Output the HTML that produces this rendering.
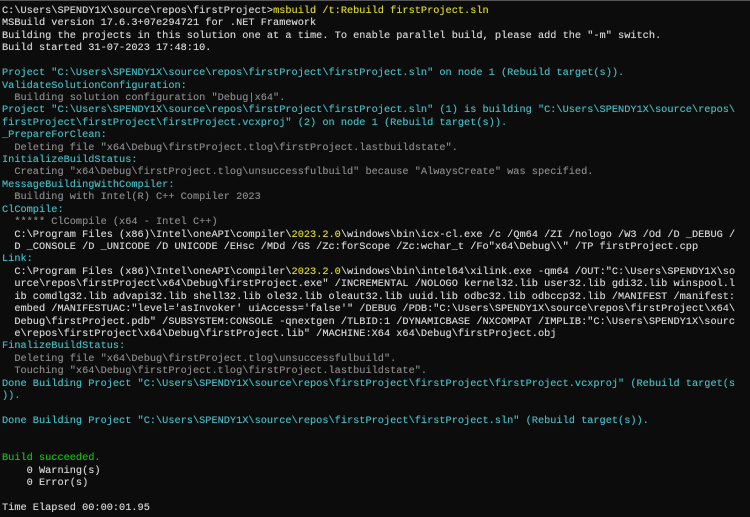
<!DOCTYPE html>
<html><head><meta charset="utf-8"><style>
html,body{margin:0;padding:0;background:#0c0c0c;width:750px;height:517px;overflow:hidden}
pre{margin:0;padding:4px 0 0 2px;font-family:"Liberation Mono",monospace;font-size:10.28px;line-height:12.42px;color:#d0d0d0;white-space:pre;border-top:1px solid #555;text-shadow:0 0 0.4px currentColor}
.c{color:#40b8be}.g{color:#858585}.y{color:#d6d22a}.gr{color:#16b80e}
</style></head><body><pre>C:\Users\SPENDY1X\source\repos\firstProject&gt;<span class="y">msbuild /t:Rebuild firstProject.sln</span>
MSBuild version 17.6.3+07e294721 for .NET Framework
Building the projects in this solution one at a time. To enable parallel build, please add the "-m" switch.
Build started 31-07-2023 17:48:10.

<span class="c">Project "C:\Users\SPENDY1X\source\repos\firstProject\firstProject.sln" on node 1 (Rebuild target(s)).</span>
<span class="c">ValidateSolutionConfiguration:</span>
<span class="g">  Building solution configuration "Debug|x64".</span>
<span class="c">Project "C:\Users\SPENDY1X\source\repos\firstProject\firstProject.sln" (1) is building "C:\Users\SPENDY1X\source\repos\</span>
<span class="c">firstProject\firstProject\firstProject.vcxproj" (2) on node 1 (Rebuild target(s)).</span>
<span class="c">_PrepareForClean:</span>
<span class="g">  Deleting file "x64\Debug\firstProject.tlog\firstProject.lastbuildstate".</span>
<span class="c">InitializeBuildStatus:</span>
<span class="g">  Creating "x64\Debug\firstProject.tlog\unsuccessfulbuild" because "AlwaysCreate" was specified.</span>
<span class="c">MessageBuildingWithCompiler:</span>
<span class="g">  Building with Intel(R) C++ Compiler 2023</span>
<span class="c">ClCompile:</span>
<span class="g">  ***** ClCompile (x64 - Intel C++)</span>
  C:\Program Files (x86)\Intel\oneAPI\compiler\<span class="y">2023.2.0</span>\windows\bin\icx-cl.exe /c /Qm64 /ZI /nologo /W3 /Od /D _DEBUG /
  D _CONSOLE /D _UNICODE /D UNICODE /EHsc /MDd /GS /Zc:forScope /Zc:wchar_t /Fo"x64\Debug\\" /TP firstProject.cpp
<span class="c">Link:</span>
  C:\Program Files (x86)\Intel\oneAPI\compiler\<span class="y">2023.2.0</span>\windows\bin\intel64\xilink.exe -qm64 /OUT:"C:\Users\SPENDY1X\so
  urce\repos\firstProject\x64\Debug\firstProject.exe" /INCREMENTAL /NOLOGO kernel32.lib user32.lib gdi32.lib winspool.l
  ib comdlg32.lib advapi32.lib shell32.lib ole32.lib oleaut32.lib uuid.lib odbc32.lib odbccp32.lib /MANIFEST /manifest:
  embed /MANIFESTUAC:"level='asInvoker' uiAccess='false'" /DEBUG /PDB:"C:\Users\SPENDY1X\source\repos\firstProject\x64\
  Debug\firstProject.pdb" /SUBSYSTEM:CONSOLE -qnextgen /TLBID:1 /DYNAMICBASE /NXCOMPAT /IMPLIB:"C:\Users\SPENDY1X\sourc
  e\repos\firstProject\x64\Debug\firstProject.lib" /MACHINE:X64 x64\Debug\firstProject.obj
<span class="c">FinalizeBuildStatus:</span>
<span class="g">  Deleting file "x64\Debug\firstProject.tlog\unsuccessfulbuild".</span>
<span class="g">  Touching "x64\Debug\firstProject.tlog\firstProject.lastbuildstate".</span>
<span class="c">Done Building Project "C:\Users\SPENDY1X\source\repos\firstProject\firstProject\firstProject.vcxproj" (Rebuild target(s</span>
<span class="c">)).</span>

<span class="c">Done Building Project "C:\Users\SPENDY1X\source\repos\firstProject\firstProject.sln" (Rebuild target(s)).</span>


<span class="gr">Build succeeded.</span>
    0 Warning(s)
    0 Error(s)

Time Elapsed 00:00:01.95
</pre></body></html>
